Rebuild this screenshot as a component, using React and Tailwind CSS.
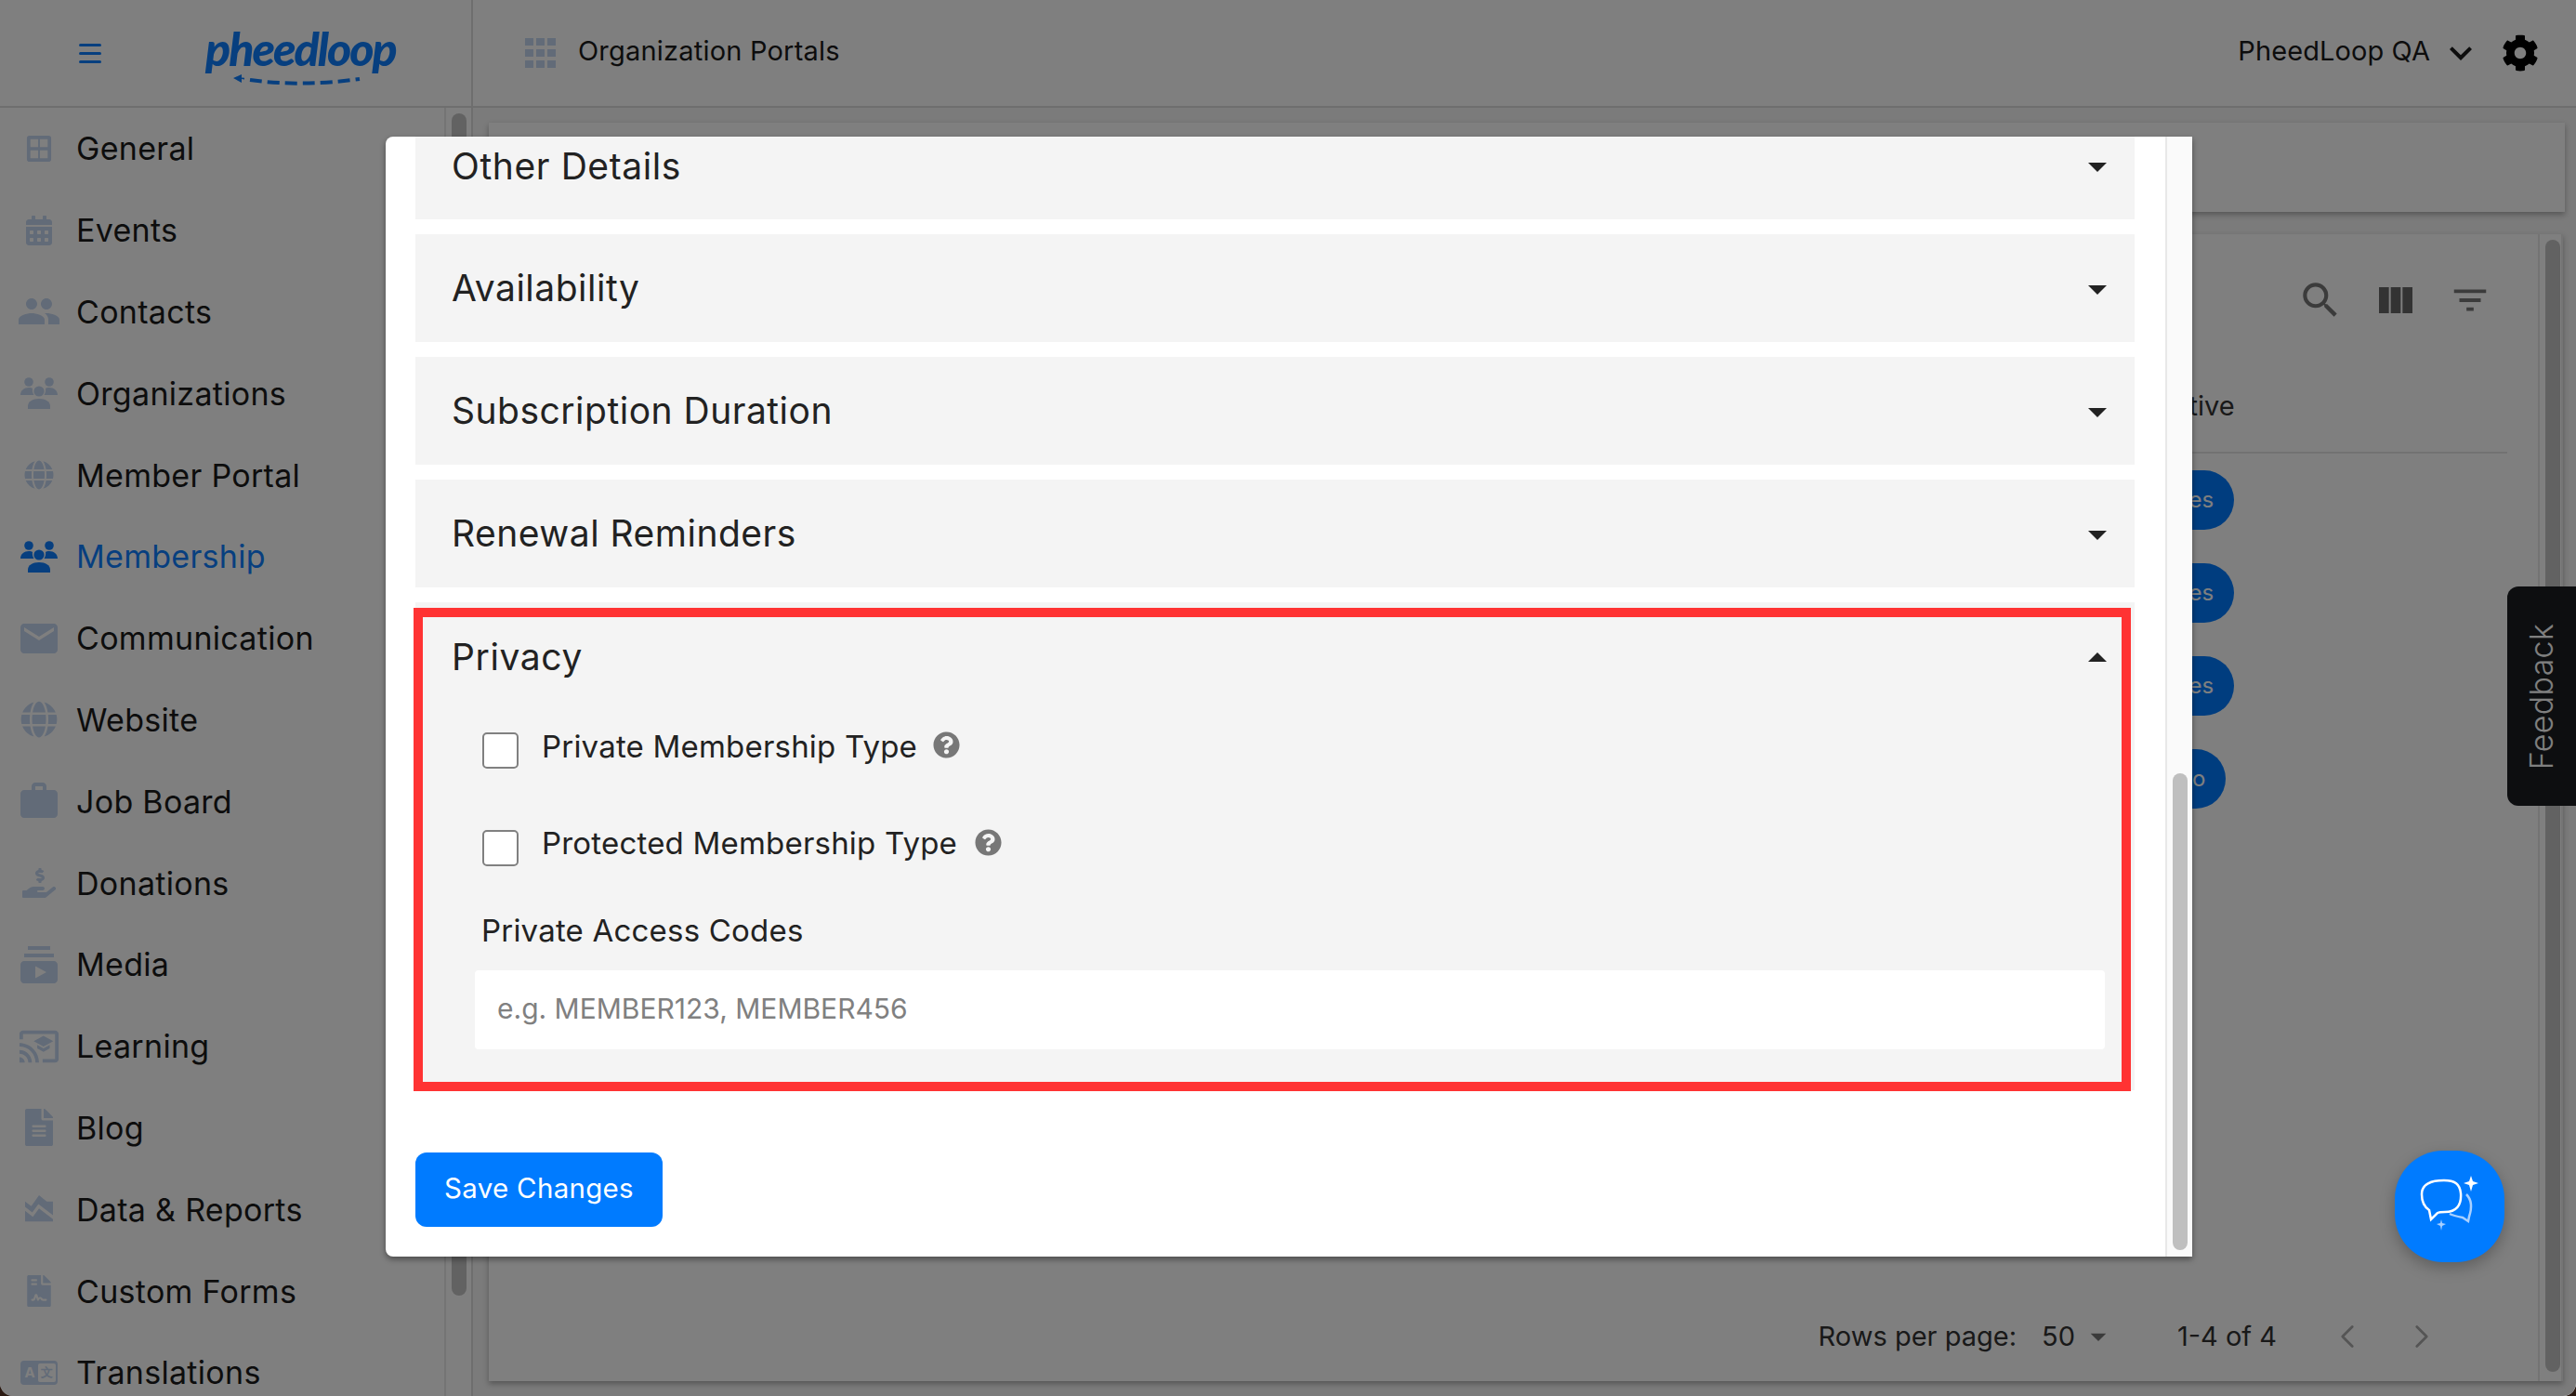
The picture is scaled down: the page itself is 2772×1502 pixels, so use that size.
import React from 'react'
import {
  MdPeople, MdEmail, MdWork, MdSubscriptions, MdCastForEducation, MdAreaChart,
  MdSearch, MdViewColumn, MdFilterList, MdArrowDropDown, MdArrowDropUp, MdKeyboardArrowDown,
} from 'react-icons/md'
import { FaCalendarAlt, FaGlobe, FaHandHoldingUsd, FaFileAlt, FaFileContract, FaCog, FaQuestionCircle } from 'react-icons/fa'
import { ChevronLeft, ChevronRight } from 'lucide-react'

function GeneralIcon({ className }) {
  return (
    <svg viewBox="0 0 28 30" className={className} fill="currentColor">
      <path fillRule="evenodd" d="M3 0h22a3 3 0 0 1 3 3v24a3 3 0 0 1-3 3H3a3 3 0 0 1-3-3V3a3 3 0 0 1 3-3zM4 4v9h9V4H4zm11 0v9h9V4h-9zM4 17v9h9v-9H4zm11 0v9h9v-9h-9z" />
    </svg>
  )
}

function GroupIcon() {
  return (
    <svg viewBox="0 0 40 34" className="w-[40px] h-[34px]" fill="currentColor">
      <circle cx="9" cy="5" r="4.8" />
      <circle cx="31" cy="5" r="4.8" />
      <circle cx="20" cy="15" r="5.6" />
      <path d="M0 19c0-5 4-8 9-8 2 0 3 .4 4 1-.5 2 .2 5 1.5 7z" />
      <path d="M40 19c0-5-4-8-9-8-2 0-3 .4-4 1 .5 2-.2 5-1.5 7z" />
      <path d="M8 34v-3c0-5 5-8 12-8s12 3 12 8v3z" />
    </svg>
  )
}

function TranslateIcon() {
  return (
    <div className="flex items-center justify-between rounded-[4px] bg-[#c4d6f0] w-[40px] h-[26px] pl-[5px] pr-[2px]">
      <span className="text-white text-[15px] font-bold leading-none">A</span>
      <span className="bg-white text-[#c4d6f0] rounded-[2px] w-[19px] h-[20px] flex items-center justify-center text-[13px] font-bold leading-none">文</span>
    </div>
  )
}

const menu = [
  { label: 'General', icon: <GeneralIcon className="w-[28px] h-[28px]" /> },
  { label: 'Events', icon: <FaCalendarAlt className="w-[28px] h-[32px]" /> },
  { label: 'Contacts', icon: <MdPeople className="w-[48px] h-[48px]" /> },
  { label: 'Organizations', icon: <GroupIcon /> },
  { label: 'Member Portal', icon: <FaGlobe className="w-[32px] h-[32px]" /> },
  { label: 'Membership', icon: <GroupIcon />, active: true },
  { label: 'Communication', icon: <MdEmail className="w-[48px] h-[48px]" /> },
  { label: 'Website', icon: <FaGlobe className="w-[40px] h-[40px]" /> },
  { label: 'Job Board', icon: <MdWork className="w-[48px] h-[48px]" /> },
  { label: 'Donations', icon: <FaHandHoldingUsd className="w-[36px] h-[34px]" /> },
  { label: 'Media', icon: <MdSubscriptions className="w-[48px] h-[48px]" /> },
  { label: 'Learning', icon: <MdCastForEducation className="w-[46px] h-[46px]" /> },
  { label: 'Blog', icon: <FaFileAlt className="w-[32px] h-[40px]" /> },
  { label: 'Data & Reports', icon: <MdAreaChart className="w-[40px] h-[40px]" /> },
  { label: 'Custom Forms', icon: <FaFileContract className="w-[26px] h-[34px]" /> },
  { label: 'Translations', icon: <TranslateIcon /> },
]

const pills = ['Yes', 'Yes', 'Yes', 'No']
const sections = ['Availability', 'Subscription Duration', 'Renewal Reminders']

function ChatIcon() {
  return (
    <svg viewBox="0 0 70 70" className="w-[70px] h-[70px]" fill="none">
      <path d="M29 7c12 0 17 4 18 14 1 13-5 20-17 20-3 0-6 0-8 1l-7 7-2-10C7 35 5 29 5 22 5 12 13 7 29 7z" stroke="white" strokeWidth="2.5" />
      <path d="M53 22c5 5 7 12 3 24l-1 5-6-4c-5-1-10-2-14-4" stroke="#a9d0ff" strokeWidth="2.5" />
      <path d="M58 2l2 6 6 2-6 2-2 7-2-7-6-2 6-2z" fill="white" />
      <path d="M26 49l1 4 4 1-4 2-1 5-1-5-4-2 4-1z" fill="#a9d0ff" />
    </svg>
  )
}

export default function App() {
  return (
    <div className="w-full h-screen bg-[#2b1a12] overflow-hidden font-['Inter',sans-serif]">
      <div className="relative w-full h-full bg-white rounded-b-[14px] overflow-hidden text-[#1a1a1a]">
        {/* top bar */}
        <header className="h-[116px] flex items-center border-b-2 border-[#dcdcdc]">
          <div className="w-[509px] h-full shrink-0 flex items-center border-r-2 border-[#dcdcdc]">
            <div className="ml-[85px] w-[24px] flex flex-col gap-[6px]">
              <span className="h-[3px] rounded bg-[#0f7fff]" />
              <span className="h-[3px] rounded bg-[#0f7fff]" />
              <span className="h-[3px] rounded bg-[#0f7fff]" />
            </div>
            <div className="relative ml-[112px] w-[200px] h-[70px]">
              <span className="block text-center text-[#0f7fff] text-[50px] leading-[60px] italic font-black tracking-[-2px] font-['Lato',sans-serif]">pheedloop</span>
              <svg viewBox="0 0 140 12" className="absolute left-[30px] bottom-0 w-[140px] h-[12px]" fill="none">
                <path d="M0 4l9-4v3.5l3 .3v1.6l-3-.3V9z" fill="#0f7fff" />
                <path d="M18 6c35 5 75 5 118-1" stroke="#0f7fff" strokeWidth="4" strokeDasharray="13 6" />
              </svg>
            </div>
          </div>
          <div className="flex items-center flex-1 pl-[56px] pr-[42px]">
            <svg viewBox="0 0 33 32" className="w-[33px] h-[32px] text-[#c4d6f0]" fill="currentColor">
              {[0, 12, 24].flatMap(y => [0, 12, 24].map(x => <rect key={`${x}-${y}`} x={x} y={y} width="9" height="8" />))}
            </svg>
            <span className="ml-[24px] -mt-[4px] text-[29px] tracking-[0.2px]">Organization Portals</span>
            <span className="ml-auto -mt-[4px] text-[29px] tracking-[0.1px]">PheedLoop QA</span>
            <MdKeyboardArrowDown className="ml-[9px] w-[48px] h-[48px]" />
            <FaCog className="ml-[20px] -mr-[2px] w-[40px] h-[40px] text-black" />
          </div>
        </header>

        <div className="flex h-[calc(100%-116px)]">
          {/* sidebar */}
          <aside className="w-[509px] shrink-0 flex border-r-2 border-[#dcdcdc]">
            <nav className="flex-1 flex flex-col overflow-hidden">
              {menu.map(item => (
                <div key={item.label} className={`h-[87.8px] shrink-0 flex items-center ${item.active ? 'text-[#0f7fff]' : ''}`}>
                  <span className={`w-[82px] pl-[1px] flex items-center justify-center ${item.active ? '' : 'text-[#c4d6f0]'}`}>{item.icon}</span>
                  <span className="text-[34px] tracking-[0.3px] whitespace-nowrap">{item.label}</span>
                </div>
              ))}
            </nav>
            <div className="w-[29px] border-l-2 border-[#e8e8e8] pt-[6px] pl-[6px]">
              <div className="w-[16px] h-[1272px] rounded-full bg-[#c4c4c4]" />
            </div>
          </aside>

          {/* page behind the dialog */}
          <main className="flex-1 bg-[#f6f6f6] pl-[17px] pr-[12px] pt-[16px] flex flex-col gap-[24px]">
            <div className="h-[96px] bg-white shadow-[0_3px_6px_rgba(0,0,0,0.3)]" />
            <div className="h-[1234px] mr-[2px] bg-white shadow-[0_3px_6px_rgba(0,0,0,0.3)] flex">
              <div className="flex-1 flex flex-col">
                <div className="h-[142px] flex items-center justify-end pr-[50px] text-[#777] shrink-0">
                  <MdSearch className="w-[50px] h-[50px]" />
                  <MdViewColumn className="ml-[32px] w-[48px] h-[48px] text-[#666]" />
                  <MdFilterList className="ml-[33px] w-[46px] h-[46px] text-[#777]" />
                </div>
                <div className="mx-[33px] h-[94px] pb-[6px] flex items-center justify-end border-b-2 border-[#e4e4e4] shrink-0">
                  <span className="w-[110px] mr-[269px] text-[29px] text-[#333]">Active</span>
                </div>
                <div className="flex-1 flex flex-col mr-[33px]">
                  {pills.map((p, i) => (
                    <div key={i} className="h-[100px] flex items-center justify-end">
                      <div className="w-[110px] mr-[269px]">
                        <span className="inline-flex items-center justify-center h-[64px] px-[22px] rounded-full bg-[#007bff] text-white text-[24px]">{p}</span>
                      </div>
                    </div>
                  ))}
                </div>
                <div className="h-[96px] flex items-center justify-end pr-[104px] text-[#333] text-[29px] shrink-0">
                  <span>Rows per page:</span>
                  <span className="ml-[27px]">50</span>
                  <MdArrowDropDown className="ml-[5px] w-[40px] h-[40px] text-[#777]" />
                  <span className="ml-[65px]">1-4 of 4</span>
                  <ChevronLeft strokeWidth={1.6} className="ml-[55px] w-[42px] h-[42px] text-[#aaa]" />
                  <ChevronRight strokeWidth={1.6} className="ml-[38px] w-[42px] h-[42px] text-[#aaa]" />
                </div>
              </div>
              <div className="w-[27px] border-x-2 border-[#e8e8e8] pt-[6px] pl-[6px] shrink-0">
                <div className="w-[16px] h-[1218px] rounded-full bg-[#c4c4c4]" />
              </div>
            </div>
          </main>
        </div>

        {/* feedback tab */}
        <div className="absolute right-0 top-[631px] w-[74px] h-[236px] rounded-l-[12px] bg-[#1a1c20] flex items-center justify-center">
          <span className="-rotate-90 text-white text-[34px] font-light tracking-[0.3px]">Feedback</span>
        </div>

        {/* backdrop */}
        <div className="absolute inset-0 bg-black/50" />

        {/* dialog */}
        <div className="absolute left-[415px] top-[147px] w-[1944px] h-[1205px] bg-white rounded-l-[8px] shadow-[0_3px_6px_rgba(0,0,0,0.4)] flex overflow-hidden">
          <div className="flex-1 pl-[32px] pr-[33px] overflow-hidden text-[#222]">
            <div className="h-[116px] -mt-[27px] bg-[#f4f4f4] flex items-center justify-between pl-[39px] pr-[16px]">
              <span className="mt-[2px] text-[39px] tracking-[0.6px]">Other Details</span>
              <MdArrowDropDown className="mt-[2px] w-[48px] h-[48px]" />
            </div>
            {sections.map(s => (
              <div key={s} className="h-[116px] mt-[16px] bg-[#f4f4f4] flex items-center justify-between pl-[39px] pr-[16px]">
                <span className="text-[39px] tracking-[0.5px]">{s}</span>
                <MdArrowDropDown className="mt-[1px] w-[48px] h-[48px]" />
              </div>
            ))}
            <div className="h-[525px] mt-[16px] bg-[#f4f4f4]">
              <div className="h-[120px] flex items-center justify-between pl-[39px] pr-[16px]">
                <span className="-mt-[2px] text-[39px] tracking-[0.6px]">Privacy</span>
                <MdArrowDropUp className="w-[48px] h-[48px]" />
              </div>
              <div className="pl-[72px] h-[125px] flex items-start pt-[20px]">
                <span className="w-[39px] h-[39px] bg-white border-2 border-[#808080] rounded-[5px]" />
                <span className="ml-[25px] -mt-[9px] text-[33px] tracking-[0.2px]">Private Membership Type</span>
                <FaQuestionCircle className="ml-[17px] w-[29px] h-[29px] -mt-[1px] text-[#777]" />
              </div>
              <div className="pl-[72px] h-[85px] flex items-start">
                <span className="w-[39px] h-[39px] bg-white border-2 border-[#808080] rounded-[5px]" />
                <span className="ml-[25px] -mt-[10px] text-[33px] tracking-[0.2px]">Protected Membership Type</span>
                <FaQuestionCircle className="ml-[19px] w-[29px] h-[29px] -mt-[1px] text-[#777]" />
              </div>
              <div className="pl-[71px] h-[50px] text-[33px] tracking-[0.2px] leading-[47px]">Private Access Codes</div>
              <div className="mt-[16px] ml-[64px] mr-[32px] h-[85px] pb-[2px] bg-white rounded-[4px] flex items-center pl-[24px] text-[30px] text-[#808080]">e.g. MEMBER123, MEMBER456</div>
            </div>
            <button className="mt-[67px] w-[266px] h-[80px] pb-[3px] rounded-[12px] bg-[#007bff] text-white text-[29.5px] tracking-[0.3px]">Save Changes</button>
          </div>
          <div className="w-[29px] bg-[#fafafa] border-l-2 border-[#e8e8e8] shrink-0 pt-[685px] pl-[6px]">
            <div className="w-[16px] h-[513px] rounded-full bg-[#bfbfbf]" />
          </div>
        </div>

        {/* annotation */}
        <div className="absolute left-[445px] top-[654px] w-[1848px] h-[520px] border-[10px] border-[#ff3333]" />

        {/* chat button */}
        <div className="absolute left-[2577px] top-[1238px] w-[118px] h-[120px] rounded-[52px] bg-[#007bff] shadow-[0_6px_16px_rgba(0,0,0,0.25)] flex items-center justify-center">
          <ChatIcon />
        </div>
      </div>
    </div>
  )
}
